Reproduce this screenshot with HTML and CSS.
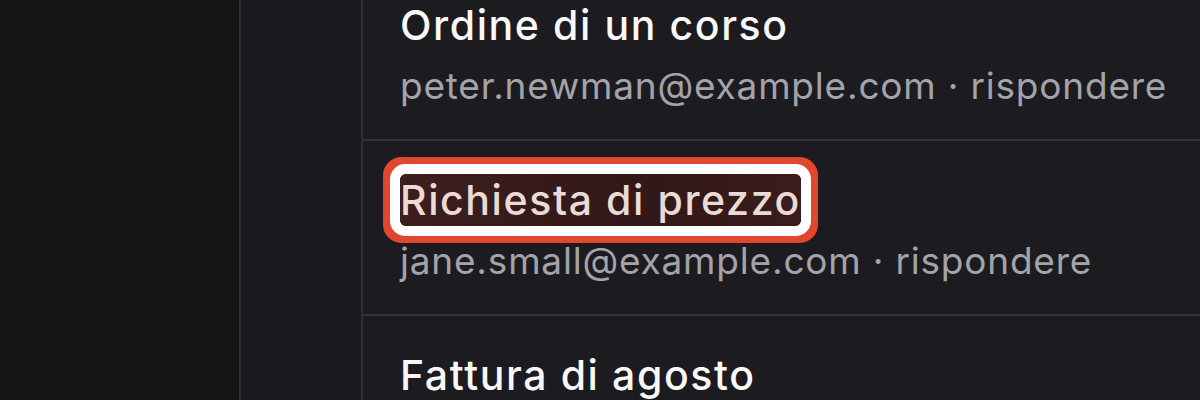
FILE: index.html
```html
<!DOCTYPE html>
<html lang="it">
<head>
<meta charset="utf-8">
<link rel="stylesheet" href="styles.css">
</head>
<body>
<div class="app">
  <aside class="nav"></aside>
  <aside class="folders"></aside>
  <main class="list">
    <div class="scroller">
      <div class="row">
        <div class="title">Ordine di un corso</div>
        <div class="meta">peter.newman@example.com · rispondere</div>
      </div>
      <div class="row">
        <div class="title"><span class="mark">Richiesta di prezzo</span></div>
        <div class="meta">jane.small@example.com · rispondere</div>
      </div>
      <div class="row">
        <div class="title">Fattura di agosto</div>
        <div class="meta">accounting@example.com · rispondere</div>
      </div>
    </div>
  </main>
</div>
</body>
</html>
```
FILE: styles.css
```css
html, body {
  margin: 0;
  padding: 0;
  height: 100%;
  background: #151517;
  font-family: Inter, "Noto Sans", sans-serif;
  overflow: hidden;
}
.app {
  display: flex;
  height: 400px;
}
.nav {
  width: 239px;
  flex: none;
  background: #151517;
  border-right: 2px solid #2e2e32;
}
.folders {
  width: 120px;
  flex: none;
  background: #1b1a1f;
  border-right: 2px solid #2e2e32;
}
.list {
  flex: 1;
  background: #1c1b20;
  overflow: hidden;
}
.scroller {
  margin-top: -34px;
}
.row {
  padding: 33px 0 0 37px;
  height: 140px;
  border-bottom: 2px solid #333338;
}
.title {
  font-size: 41px;
  font-weight: 550;
  letter-spacing: 1.6px;
  line-height: 52px;
  color: #f8f8f9;
}
.meta {
  font-size: 37px;
  letter-spacing: 0.8px;
  line-height: 52px;
  margin-top: 9px;
  color: #a3a3aa;
  white-space: nowrap;
}
.mark {
  display: inline-block;
  color: #eadbd6;
  background: linear-gradient(90deg, #3d1e1e, #321818 60%, #3a1c1c);
  border-radius: 6px;
  box-shadow: 0 0 0 10px #ffffff, 0 0 0 17px #e1472c;
}
```
